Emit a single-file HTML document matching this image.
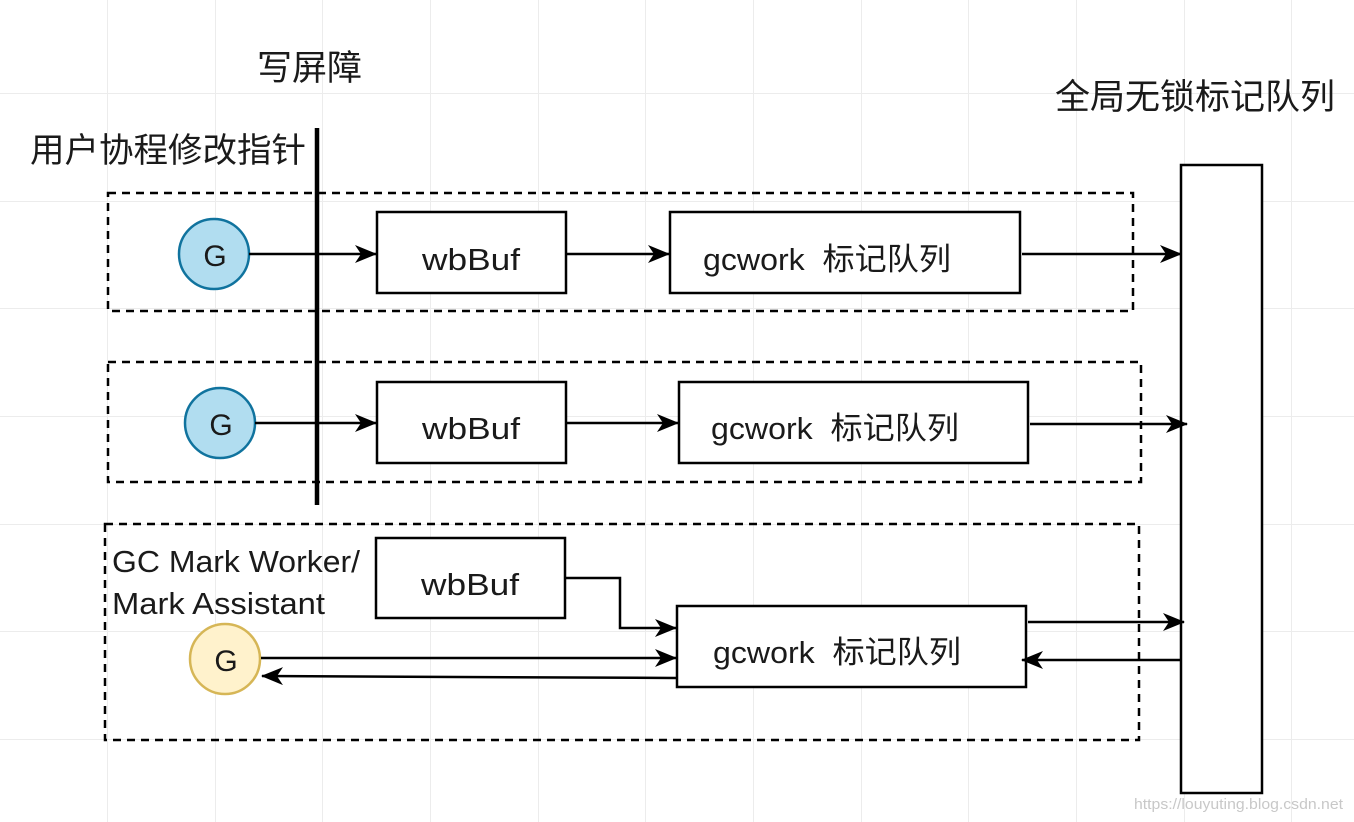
<!DOCTYPE html>
<html><head><meta charset="utf-8"><style>
html,body{margin:0;padding:0;background:#fff;}
svg{display:block;}
text{font-family:"Liberation Sans","Noto Sans CJK SC",sans-serif;fill:#1a1a1a;}
</style></head><body>
<svg width="1354" height="822" viewBox="0 0 1354 822" xmlns="http://www.w3.org/2000/svg">
<defs>
<marker id="a" viewBox="0 0 22 18" refX="21" refY="9" markerWidth="22" markerHeight="18" markerUnits="userSpaceOnUse" orient="auto">
<path d="M0,0 L22,9 L0,18 L6,9 Z" fill="#000"/>
</marker>
</defs>
<g stroke="#ececec" stroke-width="1">
<line x1="107.5" y1="0" x2="107.5" y2="822"/><line x1="215.5" y1="0" x2="215.5" y2="822"/><line x1="322.5" y1="0" x2="322.5" y2="822"/><line x1="430.5" y1="0" x2="430.5" y2="822"/><line x1="538.5" y1="0" x2="538.5" y2="822"/><line x1="645.5" y1="0" x2="645.5" y2="822"/><line x1="753.5" y1="0" x2="753.5" y2="822"/><line x1="861.5" y1="0" x2="861.5" y2="822"/><line x1="968.5" y1="0" x2="968.5" y2="822"/><line x1="1076.5" y1="0" x2="1076.5" y2="822"/><line x1="1184.5" y1="0" x2="1184.5" y2="822"/><line x1="1291.5" y1="0" x2="1291.5" y2="822"/>
<line x1="0" y1="93.5" x2="1354" y2="93.5"/><line x1="0" y1="201.5" x2="1354" y2="201.5"/><line x1="0" y1="308.5" x2="1354" y2="308.5"/><line x1="0" y1="416.5" x2="1354" y2="416.5"/><line x1="0" y1="524.5" x2="1354" y2="524.5"/><line x1="0" y1="631.5" x2="1354" y2="631.5"/><line x1="0" y1="739.5" x2="1354" y2="739.5"/>
</g>
<text x="257" y="80" font-size="35" textLength="105" lengthAdjust="spacingAndGlyphs">写屏障</text>
<text x="30" y="162" font-size="34" textLength="276" lengthAdjust="spacingAndGlyphs">用户协程修改指针</text>
<text x="1055" y="109" font-size="35" textLength="280" lengthAdjust="spacingAndGlyphs">全局无锁标记队列</text>

<g fill="none" stroke="#000" stroke-width="2.5" stroke-dasharray="8,6">
<rect x="108" y="193" width="1025" height="118"/>
<rect x="108" y="362" width="1033" height="120"/>
<rect x="105" y="524" width="1034" height="216"/>
</g>
<line x1="317" y1="128" x2="317" y2="505" stroke="#000" stroke-width="4.5"/>

<g stroke="#000" stroke-width="2.5" fill="#fff">
<rect x="377" y="212" width="189" height="81"/>
<rect x="670" y="212" width="350" height="81"/>
<rect x="377" y="382" width="189" height="81"/>
<rect x="679" y="382" width="349" height="81"/>
<rect x="376" y="538" width="189" height="80"/>
<rect x="677" y="606" width="349" height="81"/>
<rect x="1181" y="165" width="81" height="628"/>
</g>

<circle cx="214" cy="254" r="35" fill="#b1ddf0" stroke="#10739e" stroke-width="2.5"/>
<circle cx="220" cy="423" r="35" fill="#b1ddf0" stroke="#10739e" stroke-width="2.5"/>
<circle cx="225" cy="659" r="35" fill="#fff2cc" stroke="#d6b656" stroke-width="2.5"/>
<text x="215" y="266" font-size="30" text-anchor="middle">G</text>
<text x="221" y="435" font-size="30" text-anchor="middle">G</text>
<text x="226" y="671" font-size="30" text-anchor="middle">G</text>

<g stroke="#000" stroke-width="2.5" fill="none" marker-end="url(#a)">
<line x1="249" y1="254" x2="376" y2="254"/>
<line x1="566" y1="254" x2="669" y2="254"/>
<line x1="1022" y1="254" x2="1181" y2="254"/>
<line x1="255" y1="423" x2="376" y2="423"/>
<line x1="566" y1="423" x2="678" y2="423"/>
<line x1="1030" y1="424" x2="1187" y2="424"/>
<path d="M565,578 H620 V628 H676"/>
<line x1="261" y1="658" x2="676" y2="658"/>
<path d="M676,678 L262,676"/>
<line x1="1028" y1="622" x2="1184" y2="622"/>
<line x1="1182" y1="660" x2="1022" y2="660"/>
</g>

<g font-size="31">
<text x="422" y="270" textLength="98" lengthAdjust="spacingAndGlyphs">wbBuf</text>
<text x="703" y="270" textLength="248" lengthAdjust="spacingAndGlyphs">gcwork &#160;标记队列</text>
<text x="422" y="439" textLength="98" lengthAdjust="spacingAndGlyphs">wbBuf</text>
<text x="711" y="439" textLength="248" lengthAdjust="spacingAndGlyphs">gcwork &#160;标记队列</text>
<text x="421" y="595" textLength="98" lengthAdjust="spacingAndGlyphs">wbBuf</text>
<text x="713" y="663" textLength="248" lengthAdjust="spacingAndGlyphs">gcwork &#160;标记队列</text>
<text x="112" y="572" textLength="248" lengthAdjust="spacingAndGlyphs">GC Mark Worker/</text>
<text x="112" y="614" textLength="213" lengthAdjust="spacingAndGlyphs">Mark Assistant</text>
</g>
<text x="1134" y="809" font-size="15" textLength="209" lengthAdjust="spacingAndGlyphs" style="fill:#c8c8c8">https://louyuting.blog.csdn.net</text>
</svg>
</body></html>
